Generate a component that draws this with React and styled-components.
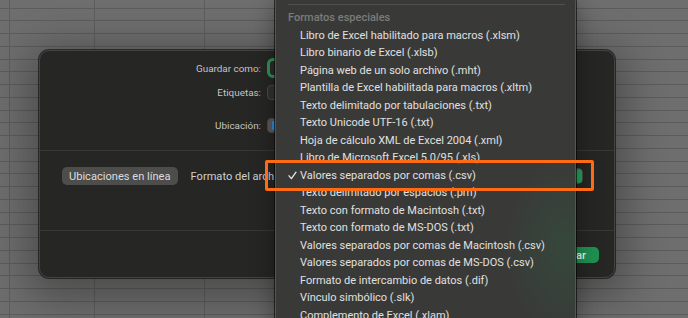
import React from "react";
import styled, { createGlobalStyle } from "styled-components";

const Global = createGlobalStyle`
  html, body { margin: 0; padding: 0; background: #6c6c6c; }
  body { font-family: Roboto, "Noto Sans", "Liberation Sans", sans-serif; -webkit-font-smoothing: antialiased; }
`;

const Desktop = styled.div`
  position: relative;
  width: 688px;
  height: 318px;
  overflow: hidden;
  background-color: #6e6e6e;
  background-image:
    linear-gradient(90deg, transparent 9px, #5d5d5d 9px, #5d5d5d 10px, transparent 10px),
    linear-gradient(90deg, transparent 94px, #5d5d5d 94px, #5d5d5d 95px, transparent 95px),
    linear-gradient(90deg, transparent 204px, #5d5d5d 204px, #5d5d5d 205px, transparent 205px),
    repeating-linear-gradient(180deg, transparent 0, transparent 7.75px, #5c5c5c 7.75px, #5c5c5c 8.75px, transparent 8.75px, transparent 12.75px);
`;

const Dialog = styled.div`
  position: absolute;
  left: 39px;
  top: 50px;
  width: 576px;
  height: 228px;
  box-sizing: border-box;
  background: #262625;
  border: 1px solid #434342;
  border-radius: 10px;
  box-shadow: 0 0 0 1px rgba(0, 0, 0, 0.55), 0 10px 40px 12px rgba(0, 0, 0, 0.3);
  display: flex;
  flex-direction: column;
  font-size: 9.9px;
  color: #c9c9c9;
`;

const Section = styled.div`
  height: ${(p) => p.$h}px;
  box-sizing: border-box;
  border-bottom: ${(p) => (p.$last ? "none" : "1px solid #383837")};
  padding: ${(p) => p.$pad};
  display: flex;
  flex-direction: ${(p) => (p.$col ? "column" : "row")};
  align-items: ${(p) => (p.$col ? "stretch" : "flex-start")};
  justify-content: ${(p) => p.$justify || "flex-start"};
`;

const Row = styled.div`
  display: flex;
  align-items: center;
  gap: 6px;
  height: ${(p) => p.$h}px;
  margin-top: ${(p) => p.$mt || 0}px;
`;

const Label = styled.span`
  width: 215px;
  text-align: right;
  color: #c4c4c4;
`;

const FocusField = styled.div`
  width: 200px;
  height: 20px;
  box-sizing: border-box;
  border: 3px solid #2e9656;
  border-radius: 6px;
  background: #2c2c2b;
`;

const Field = styled.div`
  width: 200px;
  height: 15px;
  box-sizing: border-box;
  border-radius: 4px;
  background: ${(p) => p.$bg};
  border: 1px solid #4a4a49;
  display: flex;
  align-items: center;
  padding-left: 4px;
`;

const FolderMark = styled.div`
  width: 3px;
  height: 9px;
  background: #2f8fd8;
  border-radius: 1px;
`;

const PlainButton = styled.div`
  height: 18px;
  padding: 0 7px;
  display: flex;
  align-items: center;
  background: #4d4d4c;
  border-radius: 5px;
  color: #dcdcdc;
  font-size: 11.1px;
  white-space: nowrap;
`;

const FormatRow = styled.div`
  flex: 1;
  display: flex;
  align-items: center;
  gap: 6px;
  height: 18px;
  margin: 0 31px 0 13px;
  font-size: 11.1px;
  color: #cfcfcf;
  white-space: nowrap;
`;

const Popup = styled.div`
  flex: 1;
  height: 16px;
  box-sizing: border-box;
  border-radius: 5px;
  background: #4a4a49;
  display: flex;
  justify-content: flex-end;
  padding: 1px;
`;

const PopupCap = styled.div`
  width: 6px;
  height: 100%;
  border-radius: 4px;
  background: #24a158;
`;

const PrimaryButton = styled.div`
  height: 16px;
  width: 66px;
  display: flex;
  align-items: center;
  justify-content: center;
  background: #1f9150;
  border-radius: 5px;
  color: #f1f1f1;
  font-size: 11.1px;
  font-weight: 500;
`;

const Menu = styled.div`
  position: absolute;
  left: 275px;
  top: -4px;
  width: 301px;
  height: 340px;
  box-sizing: border-box;
  background:
    radial-gradient(ellipse 60px 90px at 290px 250px, rgba(40, 120, 70, 0.22), transparent),
    #393a38;
  border: 1px solid #555654;
  border-radius: 6px;
  box-shadow: 0 0 0 1px rgba(0, 0, 0, 0.6), 0 6px 24px rgba(0, 0, 0, 0.4);
  padding: 0 10px 0 12px;
  font-size: 11px;
  color: #e0e0e0;
`;

const MenuSeparator = styled.div`
  height: 12px;
  display: flex;
  align-items: flex-end;
  &::after {
    content: "";
    flex: 1;
    height: 1px;
    margin-bottom: 4px;
    background: #505150;
  }
`;

const MenuHeader = styled.div`
  height: 17.5px;
  line-height: 17.5px;
  color: #7b7c7a;
  font-weight: 500;
`;

const MenuItem = styled.div`
  height: 17.5px;
  display: flex;
  align-items: center;
  white-space: nowrap;
`;

const Check = styled.span`
  width: 12px;
  flex: none;
  display: flex;
  align-items: center;
`;

const Highlight = styled.div`
  position: absolute;
  left: 265px;
  top: 160px;
  width: 329px;
  height: 31px;
  box-sizing: border-box;
  border: 3px solid #ff6b12;
  border-radius: 2px;
  pointer-events: none;
`;

const CheckIcon = () => (
  <svg width="9" height="9" viewBox="0 0 9 9" fill="none">
    <path d="M1 4.8 L3.4 7.6 L8 1.2" stroke="#e6e6e6" strokeWidth="1.3" strokeLinecap="round" strokeLinejoin="round" />
  </svg>
);

const items = [
  "Libro de Excel habilitado para macros (.xlsm)",
  "Libro binario de Excel (.xlsb)",
  "Página web de un solo archivo (.mht)",
  "Plantilla de Excel habilitada para macros (.xltm)",
  "Texto delimitado por tabulaciones (.txt)",
  "Texto Unicode UTF-16 (.txt)",
  "Hoja de cálculo XML de Excel 2004 (.xml)",
  "Libro de Microsoft Excel 5.0/95 (.xls)",
  "Valores separados por comas (.csv)",
  "Texto delimitado por espacios (.prn)",
  "Texto con formato de Macintosh (.txt)",
  "Texto con formato de MS-DOS (.txt)",
  "Valores separados por comas de Macintosh (.csv)",
  "Valores separados por comas de MS-DOS (.csv)",
  "Formato de intercambio de datos (.dif)",
  "Vínculo simbólico (.slk)",
  "Complemento de Excel (.xlam)",
  "Complemento de Excel 97-2004 (.xla)",
];
const selected = "Valores separados por comas (.csv)";

export default function App() {
  return (
    <>
      <Global />
      <Desktop>
        <Dialog>
          <Section $h={100} $col $pad="7px 0 0 6px">
            <Row $h={20}>
              <Label>Guardar como:</Label>
              <FocusField />
            </Row>
            <Row $h={15} $mt={7}>
              <Label>Etiquetas:</Label>
              <Field $bg="#323231" />
            </Row>
            <Row $h={15} $mt={18}>
              <Label>Ubicación:</Label>
              <Field $bg="#5b5b5a">
                <FolderMark />
              </Field>
            </Row>
          </Section>
          <Section $h={80} $pad="16px 0 0 22px">
            <PlainButton>Ubicaciones en línea</PlainButton>
            <FormatRow>
              <span>Formato del archivo:</span>
              <Popup>
                <PopupCap />
              </Popup>
            </FormatRow>
          </Section>
          <Section $h={46} $last $pad="16px 15px 0 0" $justify="flex-end">
            <PrimaryButton>Guardar</PrimaryButton>
          </Section>
        </Dialog>

        <Menu>
          <MenuSeparator />
          <MenuHeader>Formatos especiales</MenuHeader>
          {items.map((t) => (
            <MenuItem key={t}>
              <Check>{t === selected && <CheckIcon />}</Check>
              {t}
            </MenuItem>
          ))}
        </Menu>

        <Highlight />
      </Desktop>
    </>
  );
}
